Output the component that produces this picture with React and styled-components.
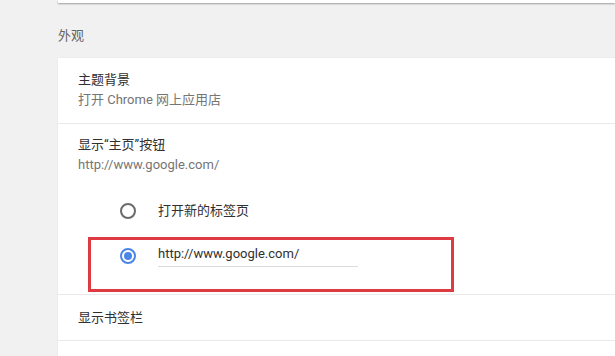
import React from "react";
import styled, { createGlobalStyle } from "styled-components";

const Global = createGlobalStyle`
  html, body { margin: 0; padding: 0; }
  body {
    background: #f1f1f1;
    font-family: Roboto, "Noto Sans CJK SC", sans-serif;
    font-size: 13px;
    color: #333;
    overflow: hidden;
  }
`;

const Page = styled.div`
  padding-left: 58px;
  height: 356px;
  overflow: hidden;
`;

const TopCard = styled.div`
  height: 3px;
  background: #fff;
  box-shadow: 0 1px 2px rgba(0, 0, 0, 0.35);
`;

const SectionTitle = styled.div`
  margin: 23px 0 12px;
  line-height: 20px;
  color: #646464;
`;

const Card = styled.div`
  background: #fff;
  box-shadow: 0 0 1px rgba(0, 0, 0, 0.12);
`;

const Row = styled.div`
  padding: ${(p) => p.$pad || "12px 20px 13px"};
  border-top: ${(p) => (p.$first ? "none" : "1px solid #e9e9e9")};
`;

const Label = styled.div`
  line-height: 20px;
  color: #303030;
`;

const Sub = styled.div`
  line-height: 20px;
  color: #757575;
`;

const OptionList = styled.div`
  display: flex;
  flex-direction: column;
  gap: 6px;
  margin: 16px 0 0 10px;
  width: 366px;
`;

const Option = styled.div`
  box-sizing: border-box;
  display: flex;
  align-items: ${(p) => (p.$highlight ? "flex-start" : "center")};
  height: ${(p) => (p.$highlight ? "55px" : "40px")};
  border: 3px solid ${(p) => (p.$highlight ? "#de3a42" : "transparent")};
  padding: ${(p) => (p.$highlight ? "8px 0 0 29px" : "0 0 0 29px")};
  gap: 22px;
`;

const Radio = styled.span`
  box-sizing: border-box;
  width: 16px;
  height: 16px;
  flex: none;
  border-radius: 50%;
  border: 2px solid ${(p) => (p.$checked ? "#4a85e8" : "#6b6b6b")};
  display: flex;
  align-items: center;
  justify-content: center;
  &::after {
    content: "";
    width: 8px;
    height: 8px;
    border-radius: 50%;
    background: ${(p) => (p.$checked ? "#4a85e8" : "transparent")};
  }
`;

const OptionText = styled.span`
  line-height: 20px;
  color: #303030;
`;

const UrlInput = styled.div`
  margin-top: -4px;
  width: 200px;
  line-height: 20px;
  padding-bottom: 2px;
  border-bottom: 1px solid #dcdcdc;
  color: #303030;
`;

export default function App() {
  return (
    <>
      <Global />
      <Page>
        <TopCard />
        <SectionTitle>外观</SectionTitle>
        <Card>
          <Row $first>
            <Label>主题背景</Label>
            <Sub>打开 Chrome 网上应用店</Sub>
          </Row>
          <Row $pad="11px 20px 2px">
            <Label>显示“主页”按钮</Label>
            <Sub>http://www.google.com/</Sub>
            <OptionList>
              <Option>
                <Radio />
                <OptionText>打开新的标签页</OptionText>
              </Option>
              <Option $highlight>
                <Radio $checked />
                <UrlInput>http://www.google.com/</UrlInput>
              </Option>
            </OptionList>
          </Row>
          <Row $pad="13px 20px 12px">
            <Label>显示书签栏</Label>
          </Row>
          <Row $pad="0 20px 30px" />
        </Card>
      </Page>
    </>
  );
}
